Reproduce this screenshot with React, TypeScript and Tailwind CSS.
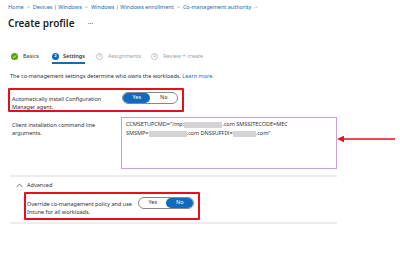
import React from "react";

const crumbs = [
  "Home",
  "Devices | Windows",
  "Windows | Windows enrollment",
  "Co-management authority",
];

function Toggle({ on }: { on: "Yes" | "No" }) {
  return (
    <div className="flex h-[12px] w-[56px] items-center rounded-full border border-[#8a8886] bg-white text-[5.5px] leading-none">
      <div
        className={
          on === "Yes"
            ? "flex h-[10px] w-[28px] items-center justify-center rounded-full bg-[#0f6cbd] text-white"
            : "flex h-[10px] w-[28px] items-center justify-center text-[#323130]"
        }
      >
        Yes
      </div>
      <div
        className={
          on === "No"
            ? "flex h-[10px] w-[27px] items-center justify-center rounded-full bg-[#0f6cbd] text-white"
            : "flex h-[10px] w-[27px] items-center justify-center text-[#323130]"
        }
      >
        No
      </div>
    </div>
  );
}

function Blur({ w }: { w: number }) {
  return (
    <span
      className="inline-block h-[6px] bg-[#d4d4d4] align-middle"
      style={{ width: w }}
    />
  );
}

export default function App() {
  return (
    <div className="h-[253px] w-[400px] overflow-hidden bg-white font-['Noto_Sans',sans-serif] text-[#323130]">
      {/* Breadcrumb */}
      <div className="flex items-center gap-[3px] pl-[8px] pt-[3px] text-[5.5px] leading-[8px] text-[#0f6cbd]">
        {crumbs.map((c) => (
          <React.Fragment key={c}>
            <span>{c}</span>
            <span className="text-[#8a8886]">&gt;</span>
          </React.Fragment>
        ))}
      </div>

      {/* Title */}
      <div className="mt-[5px] flex items-center pl-[8px]">
        <h1 className="text-[10px] font-semibold leading-[14px] text-[#201f1e]">
          Create profile
        </h1>
        <span className="ml-[13px] text-[7px] leading-none text-[#605e5c]">···</span>
      </div>

      {/* Steps */}
      <div className="mt-[21px] flex items-center pl-[11px] text-[5.5px] leading-[10px]">
        <div className="flex items-center gap-[5px]">
          <svg width="7" height="7" viewBox="0 0 16 16">
            <circle cx="8" cy="8" r="8" fill="#57a300" />
            <path d="M4.5 8.3l2.3 2.3 4.7-5" stroke="#fff" strokeWidth="2" fill="none" />
          </svg>
          <span>Basics</span>
        </div>
        <div className="relative ml-[13px] flex items-center gap-[4px]">
          <span className="flex h-[7px] w-[7px] items-center justify-center rounded-full bg-[#0f6cbd] text-[4px] font-bold leading-none text-white">
            2
          </span>
          <span className="font-semibold">Settings</span>
          <span className="absolute -bottom-[3px] left-0 right-0 h-[2px] bg-[#0f6cbd]" />
        </div>
        <div className="ml-[11px] flex items-center gap-[5px] text-[#a19f9d]">
          <span className="flex h-[7px] w-[7px] items-center justify-center rounded-full border border-[#c8c6c4] text-[4px] leading-none">
            3
          </span>
          <span>Assignments</span>
        </div>
        <div className="ml-[10px] flex items-center gap-[5px] text-[#a19f9d]">
          <span className="flex h-[7px] w-[7px] items-center justify-center rounded-full border border-[#c8c6c4] text-[4px] leading-none">
            4
          </span>
          <span>Review + create</span>
        </div>
      </div>

      {/* Description */}
      <p className="mt-[11px] pl-[10px] text-[5.5px] leading-[8px]">
        The co-management settings determine who owns the workloads.{" "}
        <span className="text-[#0f6cbd]">Learn more.</span>
      </p>

      {/* Auto install */}
      <div className="ml-[8px] mt-[8px] flex h-[24px] w-[176px] items-start rounded-[1px] border-2 border-[#e3101d] pl-[2px] pt-[2px]">
        <div className="mt-[3px] w-[104px] text-[5.5px] leading-[8px]">
          Automatically install Configuration Manager agent.
        </div>
        <div className="ml-[6px]">
          <Toggle on="Yes" />
        </div>
      </div>

      {/* Command line */}
      <div className="mt-[5px] flex items-start">
        <div className="ml-[12px] mt-[4px] w-[100px] text-[5.5px] leading-[8px]">
          Client installation command line arguments.
        </div>
        <div className="ml-[9px] h-[52px] w-[216px] border border-[#c9a0dc] px-[4px] pt-[2px] text-[5.5px] leading-[9px]">
          <div>
            CCMSETUPCMD="/mp:<Blur w={38} />.com SMSSITECODE=MEC
          </div>
          <div>
            SMSMP=<Blur w={38} />.com DNSSUFFIX=<Blur w={23} />.com"
          </div>
        </div>
        <svg width="60" height="8" viewBox="0 0 60 8" className="mt-[18px]">
          <line x1="4" y1="4" x2="58" y2="4" stroke="#e3101d" strokeWidth="1.5" />
          <path d="M0 4 L7 0.8 L7 7.2 Z" fill="#e3101d" />
        </svg>
      </div>

      <div className="ml-[10px] mt-[6px] h-[2px] w-[327px] bg-[#ececec]" />

      {/* Advanced */}
      <div className="mt-[4px] flex items-center pl-[16px] text-[5.5px] leading-[8px]">
        <svg width="7" height="5" viewBox="0 0 10 6">
          <path d="M1 5 L5 1 L9 5" stroke="#323130" strokeWidth="1" fill="none" />
        </svg>
        <span className="ml-[4px]">Advanced</span>
      </div>

      <div className="ml-[24px] mt-[3px] flex h-[28px] w-[176px] items-start rounded-[1px] border-2 border-[#e3101d] pl-[1px] pt-[3px]">
        <div className="mt-[3px] w-[108px] text-[5.5px] leading-[8px]">
          Override co-management policy and use Intune for all workloads.
        </div>
        <div className="ml-[3px]">
          <Toggle on="No" />
        </div>
      </div>

      <div className="ml-[10px] mt-[2px] h-[2px] w-[327px] bg-[#ececec]" />
    </div>
  );
}
